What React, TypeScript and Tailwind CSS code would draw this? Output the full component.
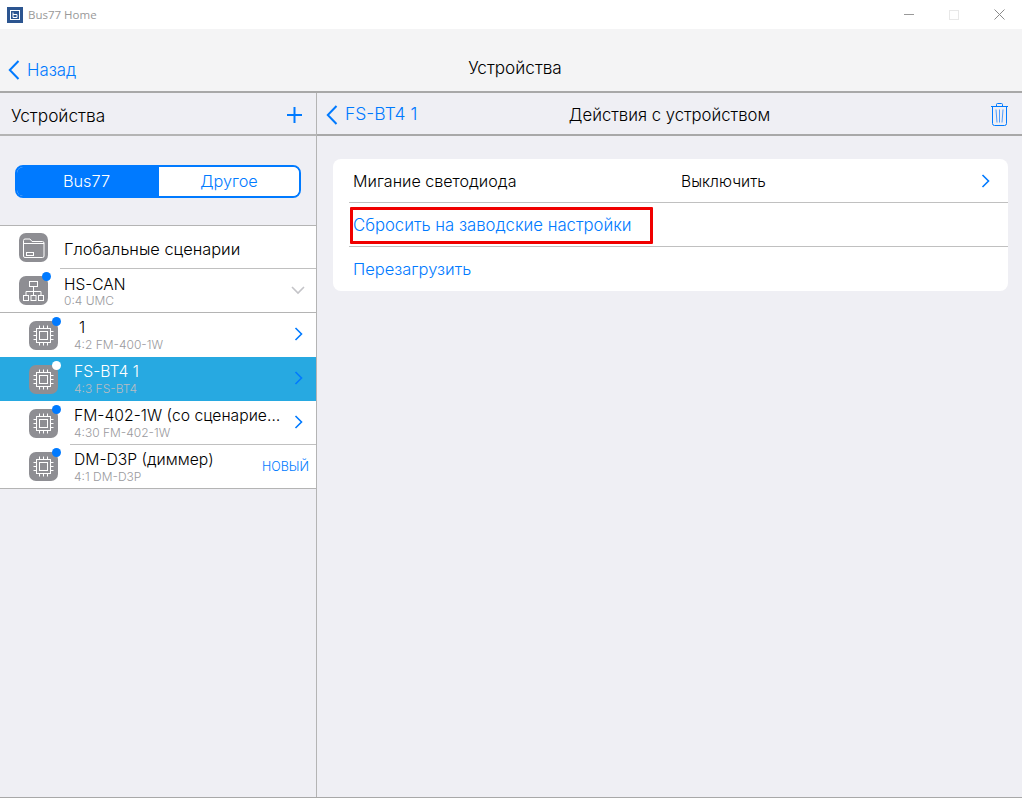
const ChevronRight = ({ className = "" }: { className?: string }) => (
  <svg width="9" height="14" viewBox="0 0 9 14" fill="none" className={className}>
    <path d="M1.5 1L7.5 7L1.5 13" stroke="currentColor" strokeWidth="1.6" />
  </svg>
);

const ChevronLeft = () => (
  <svg width="12" height="20" viewBox="0 0 12 20" fill="none" className="text-[#007aff]">
    <path d="M10.5 1L1.8 10L10.5 19" stroke="currentColor" strokeWidth="2" />
  </svg>
);

const Badge = ({ white }: { white?: boolean }) => (
  <span
    className={`absolute -top-[4px] -right-[3px] h-[9px] w-[9px] rounded-full ${white ? "bg-white" : "bg-[#007aff]"}`}
  />
);

const ChipIcon = ({ white }: { white?: boolean }) => (
  <div className="relative h-[29px] w-[29px] shrink-0 rounded-[7px] bg-[#8e8e93]">
    <svg width="29" height="29" viewBox="0 0 29 29" fill="none" stroke="white" strokeWidth="1">
      <rect x="7.5" y="7.5" width="14" height="14" />
      <rect x="10.5" y="10.5" width="8" height="8" />
      <path d="M10.5 4.5V7M14.5 4.5V7M18.5 4.5V7M10.5 22V24.5M14.5 22V24.5M18.5 22V24.5M4.5 10.5H7M4.5 14.5H7M4.5 18.5H7M22 10.5H24.5M22 14.5H24.5M22 18.5H24.5" />
    </svg>
    <Badge white={white} />
  </div>
);

const FolderIcon = () => (
  <div className="h-[29px] w-[29px] shrink-0 rounded-[7px] bg-[#8e8e93]">
    <svg width="29" height="29" viewBox="0 0 29 29" fill="none" stroke="white" strokeWidth="1">
      <path d="M4.5 23V7.5a1.5 1.5 0 0 1 1.5-1.5h5l2 2.5h10.5a1.5 1.5 0 0 1 1.5 1.5V23a1.5 1.5 0 0 1-1.5 1.5H6A1.5 1.5 0 0 1 4.5 23Z" />
      <path d="M4.5 10.5H25" />
      <rect x="7.5" y="19.5" width="7" height="3" />
    </svg>
  </div>
);

const NetworkIcon = () => (
  <div className="relative h-[29px] w-[29px] shrink-0 rounded-[7px] bg-[#8e8e93]">
    <svg width="29" height="29" viewBox="0 0 29 29" fill="none" stroke="white" strokeWidth="1">
      <rect x="10.5" y="5.5" width="8" height="5" />
      <rect x="4.5" y="19.5" width="5" height="5" />
      <rect x="12" y="19.5" width="5" height="5" />
      <rect x="19.5" y="19.5" width="5" height="5" />
      <path d="M14.5 10.5V19.5M7 19.5V15.5H22V19.5" />
    </svg>
    <Badge />
  </div>
);

const DeviceRow = ({
  title,
  sub,
  selected,
  right,
  border,
  titleIndent,
  last,
}: {
  title: string;
  sub: string;
  selected?: boolean;
  right?: React.ReactNode;
  border?: boolean;
  titleIndent?: boolean;
  last?: boolean;
}) => (
  <div className={`relative flex items-center pl-[29px] pr-[13px] ${last ? "h-[43px]" : "h-[44px]"} ${selected ? "bg-[#27a9e1]" : "bg-white"}`}>
    <ChipIcon white={selected} />
    <div className="ml-[16px] min-w-0 flex-1">
      <div className={`whitespace-nowrap text-[15.7px] leading-[18px] ${selected ? "text-white" : "text-black"} ${titleIndent ? "pl-[5px]" : ""}`}>
        {title}
      </div>
      <div className={`mt-[1px] text-[12px] leading-[13px] ${selected ? "text-[#b9bcc2]" : "text-[#9a9a9e]"}`}>{sub}</div>
    </div>
    {right}
    {border && <div className="absolute right-0 bottom-0 left-[70px] h-px bg-[#c0c0c0]" />}
  </div>
);

export default function App() {
  return (
    <div className="flex h-[798px] w-[1022px] flex-col overflow-hidden bg-[#efeff4] font-['Inter',sans-serif] font-light">
      {/* title bar */}
      <div className="flex h-[29px] shrink-0 items-center bg-white pl-[7px]">
        <svg width="16" height="16" viewBox="0 0 16 16" fill="none">
          <rect width="16" height="16" fill="#2c5590" />
          <rect x="3.5" y="3.5" width="9" height="9" stroke="white" />
          <path d="M6 5.5V10.5H10V7.5H6" stroke="white" />
        </svg>
        <span className="ml-[5px] font-['Open_Sans',sans-serif] text-[11.5px] font-normal text-[#999]">Bus77 Home</span>
        <div className="ml-auto flex items-center">
          <div className="h-px w-[10px] bg-[#999]" />
          <div className="ml-[35px] h-[10px] w-[10px] border border-[#e8e8e8]" />
          <svg width="11" height="11" viewBox="0 0 11 11" className="mr-[17px] ml-[35px]" stroke="#8a8a8a" fill="none">
            <path d="M0.5 0.5L10.5 10.5M10.5 0.5L0.5 10.5" />
          </svg>
        </div>
      </div>

      {/* nav bar */}
      <div className="relative flex h-[64px] shrink-0 items-end border-b-2 border-[#a8a8a8] bg-[#f4f4f5] pb-[11px] pl-[8px]">
        <ChevronLeft />
        <span className="ml-[7px] text-[16.8px] leading-[20px] text-[#007aff]">Назад</span>
        <span className="absolute right-0 bottom-[13px] left-[8px] text-center text-[17.2px] leading-[20px] text-black">
          Устройства
        </span>
      </div>

      <div className="flex min-h-0 flex-1 border-b border-[#a8a8a8]">
        {/* left pane */}
        <div className="w-[317px] shrink-0 border-r border-[#b4b4b4]">
          <div className="flex h-[43px] items-center justify-between border-b-2 border-[#b4b4b4] pt-[2px] pr-[14px] pl-[11px]">
            <span className="mt-[2px] text-[17.3px] text-black">Устройства</span>
            <svg width="15" height="16" viewBox="0 0 15 16" stroke="#007aff" strokeWidth="2">
              <path d="M7.5 0V16M0 8H15" />
            </svg>
          </div>
          <div className="mx-[15px] mt-[29px] flex h-[33px] w-[286px] overflow-hidden rounded-[8px] border-2 border-[#007aff] text-[16.3px] leading-[29px]">
            <div className="w-[142px] bg-[#007aff] pr-[3px] text-center text-white">Bus77</div>
            <div className="flex-1 bg-white text-center text-[#007aff]">Другое</div>
          </div>
          <div className="mt-[27px] border-y border-[#b4b4b4] bg-white">
            <div className="relative flex h-[43px] items-center pl-[19px]">
              <FolderIcon />
              <span className="mt-[4px] ml-[16px] text-[16.4px] text-black">Глобальные сценарии</span>
              <div className="absolute right-0 bottom-0 left-[60px] h-px bg-[#c0c0c0]" />
            </div>
            <div className="relative flex h-[44px] items-center border-b border-[#b4b4b4] pr-[11px] pl-[19px]">
              <NetworkIcon />
              <div className="mt-[2px] ml-[16px] flex-1">
                <div className="text-[15.5px] leading-[18px] text-black">HS-CAN</div>
                <div className="text-[12px] leading-[13px] text-[#9a9a9e]">0:4 UMC</div>
              </div>
              <svg width="14" height="9" viewBox="0 0 14 9" fill="none" stroke="#c4c4c8" strokeWidth="1.6">
                <path d="M1 1L7 7L13 1" />
              </svg>
            </div>
            <DeviceRow title="1" sub="4:2 FM-400-1W" titleIndent right={<ChevronRight className="mb-[2px] text-[#007aff]" />} />
            <DeviceRow title="FS-BT4 1" sub="4:3 FS-BT4" selected right={<ChevronRight className="mb-[2px] text-[#007aff]" />} />
            <DeviceRow
              title="FM-402-1W (со сценарие…"
              sub="4:30 FM-402-1W"
              border
              right={<ChevronRight className="mb-[2px] text-[#007aff]" />}
            />
            <DeviceRow
              title="DM-D3P (диммер)"
              sub="4:1 DM-D3P"
              last
              right={<span className="mt-[2px] -mr-[6px] text-[12.5px] text-[#007aff]">НОВЫЙ</span>}
            />
          </div>
        </div>

        {/* right pane */}
        <div className="min-w-0 flex-1">
          <div className="relative flex h-[43px] items-center justify-between border-b-2 border-[#a8a8a8] pt-[2px] pr-[14px] pl-[9px]">
            <div className="flex items-center">
              <ChevronLeft />
              <span className="ml-[7px] text-[17.5px] text-[#007aff]">FS-BT4 1</span>
            </div>
            <span className="absolute right-0 left-0 mt-[2px] text-center text-[16.7px] text-black">Действия с устройством</span>
            <svg width="17" height="23" viewBox="0 0 17 23" fill="none" stroke="#007aff">
              <path d="M0 3.5H17M5.5 3.5V1.5A1 1 0 0 1 6.5 0.5H10.5A1 1 0 0 1 11.5 1.5V3.5M1.5 3.5V20.5A2 2 0 0 0 3.5 22.5H13.5A2 2 0 0 0 15.5 20.5V3.5" />
              <path d="M5 6.5L6 19.5M8.5 6.5V19.5M12 6.5L11 19.5" stroke="#4d9dff" />
            </svg>
          </div>
          <div className="mt-[23px] mr-[14px] ml-[16px] rounded-[8px] bg-white">
            <div className="relative flex h-[44px] items-center pr-[18px] pl-[20px] text-black">
              <span className="w-[328px] text-[16.1px]">Мигание светодиода</span>
              <span className="mt-[2px] text-[15.6px]">Выключить</span>
              <ChevronRight className="ml-auto text-[#007aff]" />
              <div className="absolute right-0 bottom-0 left-[16px] h-px bg-[#c0c0c0]" />
            </div>
            <div className="relative flex h-[44px] items-center pl-[20px] text-[16.7px] text-[#007aff]">
              <span className="mt-[2px]">Сбросить на заводские настройки</span>
              <div className="absolute right-0 bottom-0 left-[16px] h-px bg-[#c0c0c0]" />
              <div className="absolute top-[4px] left-[17px] h-[37px] w-[303px] rounded-[1px] border-[3px] border-[#f00000]" />
            </div>
            <div className="flex h-[44px] items-center pl-[20px] text-[16.5px] text-[#007aff]">Перезагрузить</div>
          </div>
        </div>
      </div>
    </div>
  );
}
